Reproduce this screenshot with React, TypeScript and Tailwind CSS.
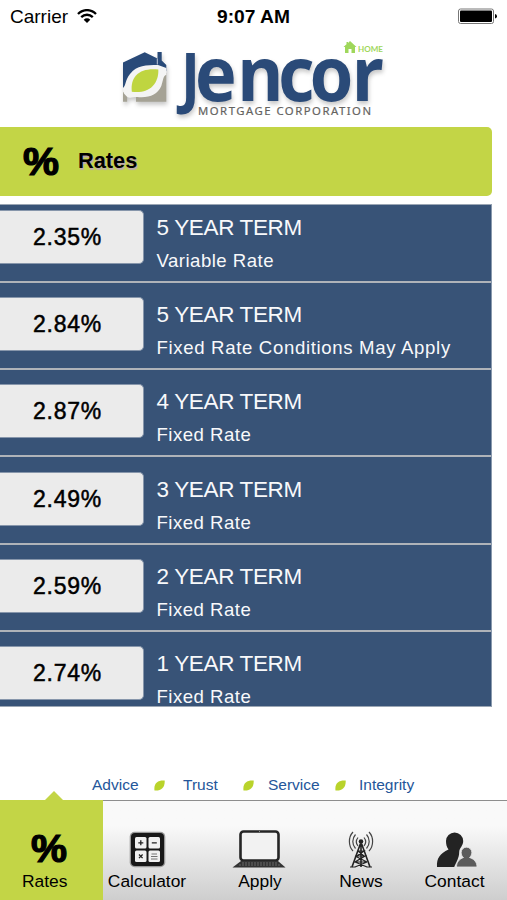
import React from 'react';

const rates = [
  { rate: '2.35%', term: '5 YEAR TERM', note: 'Variable Rate' },
  { rate: '2.84%', term: '5 YEAR TERM', note: 'Fixed Rate Conditions May Apply' },
  { rate: '2.87%', term: '4 YEAR TERM', note: 'Fixed Rate' },
  { rate: '2.49%', term: '3 YEAR TERM', note: 'Fixed Rate' },
  { rate: '2.59%', term: '2 YEAR TERM', note: 'Fixed Rate' },
  { rate: '2.74%', term: '1 YEAR TERM', note: 'Fixed Rate' },
];

function StatusBar() {
  return (
    <div className="flex h-[34px] items-start px-2.5 pt-[5px] text-[19px] leading-[24px]">
      <span className="w-[67px]">Carrier</span>
      <svg className="mt-[4px] h-[14px] w-[20px]" viewBox="0 0 20 14" fill="none" stroke="#000" strokeWidth="2.3">
        <path d="M1 5C6-.2 14-.2 19 5M4.2 8.2c3.4-3.3 8.2-3.3 11.6 0" />
        <path d="M10 14 6.7 10.7c1.9-1.8 4.7-1.8 6.6 0Z" fill="#000" stroke="none" />
      </svg>
      <span className="ml-[120px] w-[90px] whitespace-nowrap text-[19.2px] font-bold">9:07 AM</span>
      <svg className="ml-auto mt-[3px] h-[17px] w-[40px]" viewBox="0 0 40 17">
        <rect x="1.5" y="1" width="35" height="14.5" rx="2" fill="#fff" stroke="#777" />
        <rect x="3" y="2.5" width="32" height="11.5" rx="1" />
        <path d="M38 6q2 .5 2 2.3T38 10.600Z" />
      </svg>
    </div>
  );
}

function Logo() {
  return (
    <svg className="block h-[93px] w-full" viewBox="0 34 507 93">
      <g className="drop-shadow-[1px_3px_2px_rgba(0,0,0,0.22)]">
        <path d="M123 62.500 144.700 52.300 157.500 58.500V52h4.200v8.500L166.300 65v6L150 80 123 88Z" fill="#294a78" />
        <path d="M166.300 73v28.800H136V90l26-17ZM123 92h4.200v9.800H123Z" fill="#a5a295" />
        <path d="M157.300 58.500v6" stroke="#fff" strokeWidth=".7" />
        <path d="M123 88c3-2 2-8 7-14 7-9 16-9 28-9l8.300 3v7c-3 0-3 5-5 11-4 9-12 12-24 11-5 0-9 2-11-1-2-2-3.300-3-3.300-8Z" fill="#f4f4f4" />
        <path d="M131.800 91.800C130 76 140 67.500 158.300 69.500 159 84 149 94 131.800 91.800Z" fill="#bfd540" />
        <g fill="#2a4a78" className="font-['Noto_Sans',sans-serif] font-bold">
          <text x="181" y="101" fontSize="67" textLength="19" lengthAdjust="spacingAndGlyphs">J</text>
          <text x="207.200 252.600 295.700 329.300 374.500" y="101.500" fontSize="75" transform="scale(.94 1)">encor</text>
        </g>
      </g>
      <text x="198" y="115.300" fontSize="11.300" fill="#65635f" stroke="#65635f" strokeWidth=".2" textLength="173" className="font-['Noto_Sans',sans-serif]">MORTGAGE CORPORATION</text>
      <path d="M350 41l6.500 6H355v6h-3.500v-4h-3v4H345v-6h-1.500l3-2.700V42h1.500v1Z" fill="#9fd75b" />
      <text x="358" y="51.500" fontSize="8" fill="#9fd75b" textLength="25" lengthAdjust="spacingAndGlyphs" className="font-[Lato,sans-serif] font-bold">HOME</text>
    </svg>
  );
}

function Percent() {
  return (
    <svg className="block h-[30px] w-[38px] overflow-visible" viewBox="0 0 38 30">
      <text x="1" y="28" fontSize="38" textLength="36" lengthAdjust="spacingAndGlyphs" stroke="#000" strokeWidth="1.200" className="font-['Liberation_Sans',sans-serif] font-bold">%</text>
    </svg>
  );
}

function Leaf() {
  return (
    <svg className="h-[11px] w-[11px]" viewBox="0 0 11 11">
      <path d="M.5 10.500C-.5 3 4 0 10.700.500 11 8 7 11 .500 10.500Z" fill="#b9d32b" />
    </svg>
  );
}

function CalculatorIcon() {
  return (
    <svg className="h-[37px] w-[37px]" viewBox="0 0 37 37">
      <rect x=".7" y=".7" width="35.600" height="35.600" rx="5" fill="#999" />
      <rect x="2" y="2" width="33" height="33" rx="4" fill="#181818" />
      <g fill="#f1f1f1">
        <rect x="6" y="6" width="11.500" height="11.500" rx="1.500" /><rect x="19.500" y="6" width="11.500" height="11.500" rx="1.500" />
        <rect x="6" y="19.500" width="11.500" height="11.500" rx="1.500" /><rect x="19.500" y="19.500" width="11.500" height="11.500" rx="1.500" />
      </g>
      <path d="M9.300 11.800h5M11.800 9.300v5M22.800 11.800h5M10 23.500l3.600 3.600M13.600 23.500 10 27.100" stroke="#222" strokeWidth="1.300" />
      <path d="M22.500 23h5.500M22 25.500h6.500M22 28h6.500" stroke="#555" strokeWidth=".8" />
    </svg>
  );
}

function LaptopIcon() {
  return (
    <svg className="mr-[3px] h-[38px] w-[54px]" viewBox="0 0 54 38">
      <rect x="8.500" y="1.500" width="38" height="29" rx="3" fill="#f2f2f2" stroke="#252525" strokeWidth="2.600" />
      <path d="M9 31h37l7.500 6.500h-53Z" fill="#333" />
      <path d="M10 33h35M7 35h41" stroke="#777" strokeWidth=".8" strokeDasharray="2 1" />
      <circle cx="27.500" cy="1.500" r=".5" fill="#aaa" />
    </svg>
  );
}

function TowerIcon() {
  return (
    <svg className="h-[37px] w-[26px]" viewBox="0 0 26 37" fill="none" stroke="#222">
      <g strokeWidth="1.200" stroke="#444">
        <path d="M5 1C.2 6 .2 15 5 20M7.500 3.500c-3.600 4-3.600 10 0 14M10 6.500c-2 2.500-2 6 0 8.500M21 1c4.800 5 4.800 14 0 19M18.500 3.500c3.600 4 3.600 10 0 14M16 6.500c2 2.500 2 6 0 8.500" />
      </g>
      <circle cx="13" cy="10.500" r="2.300" fill="#222" stroke="none" />
      <path d="M13 11v25M12.300 13 4 36M13.700 13 22 36" strokeWidth="1.600" />
      <path d="M10 20h6l-7 5h8l-10 6h12l-12-6M16 25l-6-5M7 31l12 5M19 31 7 36M2 36h6M18 36h6" strokeWidth="1.200" />
    </svg>
  );
}

function ContactIcon() {
  return (
    <svg className="ml-[5px] h-[37px] w-[42px]" viewBox="0 0 42 37">
      <path d="M1 36C.5 27 4 22.500 12.500 18.500 10.500 16 10 13 10 10a8.600 8.600 0 0 1 17.200 0c0 5-4 7-4 11 0 6-3 10-5 15Z" fill="#232323" />
      <path d="M20.500 36c0-5 3-8 7-9.500-1.500-1-2.300-3-2.300-5a5.300 5.300 0 0 1 10.600 0c0 2-1 4-2.300 5 4.500 1.500 7.500 4.500 7.500 9.500Z" fill="#5b5b5b" stroke="#e4e4e4" strokeWidth=".8" />
    </svg>
  );
}

function Tab({ label, className, children }: { label: string; className: string; children: React.ReactNode }) {
  return (
    <div className={`flex shrink-0 flex-col items-center ${className}`}>
      <div className="flex h-[40px] items-center">{children}</div>
      <span className="mt-[2px] whitespace-nowrap text-[17.4px] leading-[20px]">{label}</span>
    </div>
  );
}

export default function App() {
  return (
    <main className="flex h-[900px] w-[507px] flex-col overflow-hidden bg-white font-['Liberation_Sans',Arial,sans-serif] text-black">
      <StatusBar />
      <Logo />
      <header className="flex h-[69px] w-[492px] shrink-0 items-center rounded-r-[5px] bg-[#c3d546] pl-[22px]">
        <Percent />
        <h1 className="mb-[1px] ml-[18px] text-[21.8px] leading-[26px] font-bold [text-shadow:1px_2px_1px_#bba8b2]">Rates</h1>
      </header>
      <section className="mt-2 h-[503px] w-[492px] shrink-0 overflow-hidden border-y border-r border-y-[#9ba6b4] border-r-[#8999ad] bg-[#385377]">
        <div className="-mt-[9px]">
          {rates.map((item) => (
            <article key={item.term + item.note} className="flex h-[87.150px] border-b-2 border-[#afb3b9] pt-[14.100px]">
              <div className="flex h-[54px] w-[144px] shrink-0 items-center rounded-r-[5px] border border-l-0 border-[#8796ab] bg-[#ebebeb] pl-[33px]">
                <span className="text-[23px] leading-[26px] tracking-[0.75px] [-webkit-text-stroke:0.5px_black]">{item.rate}</span>
              </div>
              <div className="ml-[12.500px] whitespace-nowrap text-[#f8f9fb]">
                <div className="mt-[5px] text-[22.500px] leading-[26px] tracking-[-0.35px]">{item.term}</div>
                <div className={`mt-[9px] text-[18.600px] leading-[22px] ${item.note.length > 20 ? 'tracking-[0.66px]' : 'tracking-[0.48px]'}`}>{item.note}</div>
              </div>
            </article>
          ))}
        </div>
      </section>
      <div className="mt-[69px] flex h-[18px] shrink-0 items-center pl-[92px] text-[15.500px] leading-[18px] text-[#24569a]">
        <span className="w-[62px]">Advice</span><Leaf />
        <span className="ml-[18px] w-[60px]">Trust</span><Leaf />
        <span className="ml-[14px] w-[67px]">Service</span><Leaf />
        <span className="ml-[13px]">Integrity</span>
      </div>
      <nav className="relative mt-auto flex h-[100px] shrink-0 border-t border-[#8d8d8d] bg-linear-to-b from-[#f9f9f9] from-25% to-[#cecece]">
        <div className="relative -mt-px flex w-[103px] shrink-0 flex-col bg-[#c3d546] pt-[34px]">
          <svg className="absolute -top-[9px] left-[44px] h-[10px] w-[20px]" viewBox="0 0 20 10"><path d="M10 0 20 10H0Z" fill="#c3d546" /></svg>
          <div className="ml-[30px]"><Percent /></div>
          <span className="mt-[7px] ml-[22px] text-[17.400px] leading-[20px]">Rates</span>
        </div>
        <Tab label="Calculator" className="w-[88px] pt-[28px]"><CalculatorIcon /></Tab>
        <Tab label="Apply" className="w-[138px] pt-[28px]"><LaptopIcon /></Tab>
        <Tab label="News" className="w-[64px] pt-[28px]"><TowerIcon /></Tab>
        <Tab label="Contact" className="ml-[9px] w-[105px] pt-[28px]"><ContactIcon /></Tab>
      </nav>
    </main>
  );
}
